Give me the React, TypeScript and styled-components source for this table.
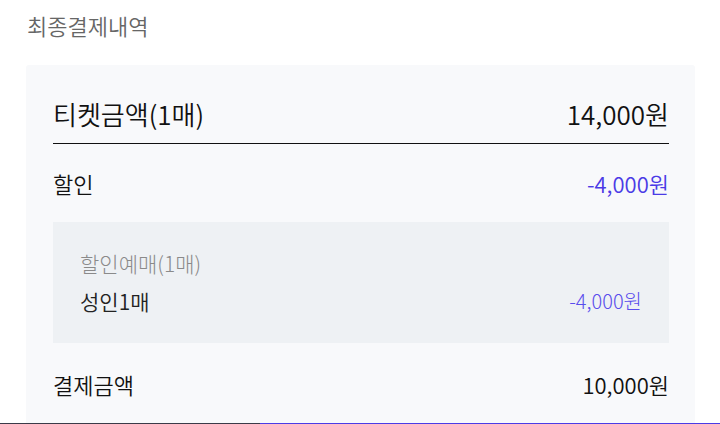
import React from 'react';
import styled, { createGlobalStyle } from 'styled-components';

const GlobalStyle = createGlobalStyle`
  html, body {
    margin: 0;
    padding: 0;
    background: #fff;
    font-family: 'Noto Sans CJK KR', 'Noto Sans', sans-serif;
    font-weight: 350;
    color: #111;
  }
`;

const Page = styled.div`
  padding: 10px 25px 0 26px;
`;

const Title = styled.h2`
  margin: 0 0 25px 1px;
  font-size: 22px;
  font-weight: 350;
  line-height: 30px;
  color: #666;
`;

const Card = styled.section`
  background: #f8f9fb;
  border-radius: 3px;
  padding: 18px 26px 40px 27px;
`;

const Row = styled.div<{ $size: number; $height: number }>`
  display: flex;
  justify-content: space-between;
  align-items: center;
  height: ${p => p.$height}px;
  font-size: ${p => p.$size}px;
  color: #111;
`;

const TotalRow = styled(Row)`
  border-bottom: 1px solid #111;
`;

const Amount = styled.span<{ $accent?: boolean }>`
  color: ${p => (p.$accent ? '#4b3be6' : '#111')};
`;

const DetailBox = styled.div`
  background: #eef1f4;
  margin: 0 0 18px;
  padding: 27px 27px 28px;
`;

const DetailTitle = styled.div`
  font-size: 21px;
  font-weight: 300;
  line-height: 28px;
  color: #8a8a8a;
  margin-bottom: 10px;
`;

const DetailRow = styled.div`
  display: flex;
  justify-content: space-between;
  align-items: center;
  font-size: 21px;
  line-height: 28px;
  color: #222;
`;

const DetailAmount = styled.span`
  font-size: 20px;
  font-weight: 300;
  color: #5a4ded;
`;

const Footer = styled.div`
  position: fixed;
  left: 0;
  right: 0;
  top: 423px;
  height: 56px;
  display: grid;
  grid-template-columns: 260px 1fr;
`;

const FooterButton = styled.button<{ $primary?: boolean }>`
  border: 0;
  margin: 0;
  padding: 0;
  background: ${p => (p.$primary ? '#4b3be6' : '#3a3a48')};
`;

export default function App() {
  return (
    <>
      <GlobalStyle />
      <Page>
        <Title>최종결제내역</Title>
        <Card>
          <TotalRow $size={26} $height={60}>
            <span>티켓금액(1매)</span>
            <Amount>14,000원</Amount>
          </TotalRow>
          <Row $size={22} $height={78}>
            <span>할인</span>
            <Amount $accent>-4,000원</Amount>
          </Row>
          <DetailBox>
            <DetailTitle>할인예매(1매)</DetailTitle>
            <DetailRow>
              <span>성인1매</span>
              <DetailAmount>-4,000원</DetailAmount>
            </DetailRow>
          </DetailBox>
          <Row $size={22} $height={46}>
            <span>결제금액</span>
            <Amount>10,000원</Amount>
          </Row>
        </Card>
      </Page>
      <Footer>
        <FooterButton aria-label="이전" />
        <FooterButton $primary aria-label="결제하기" />
      </Footer>
    </>
  );
}
